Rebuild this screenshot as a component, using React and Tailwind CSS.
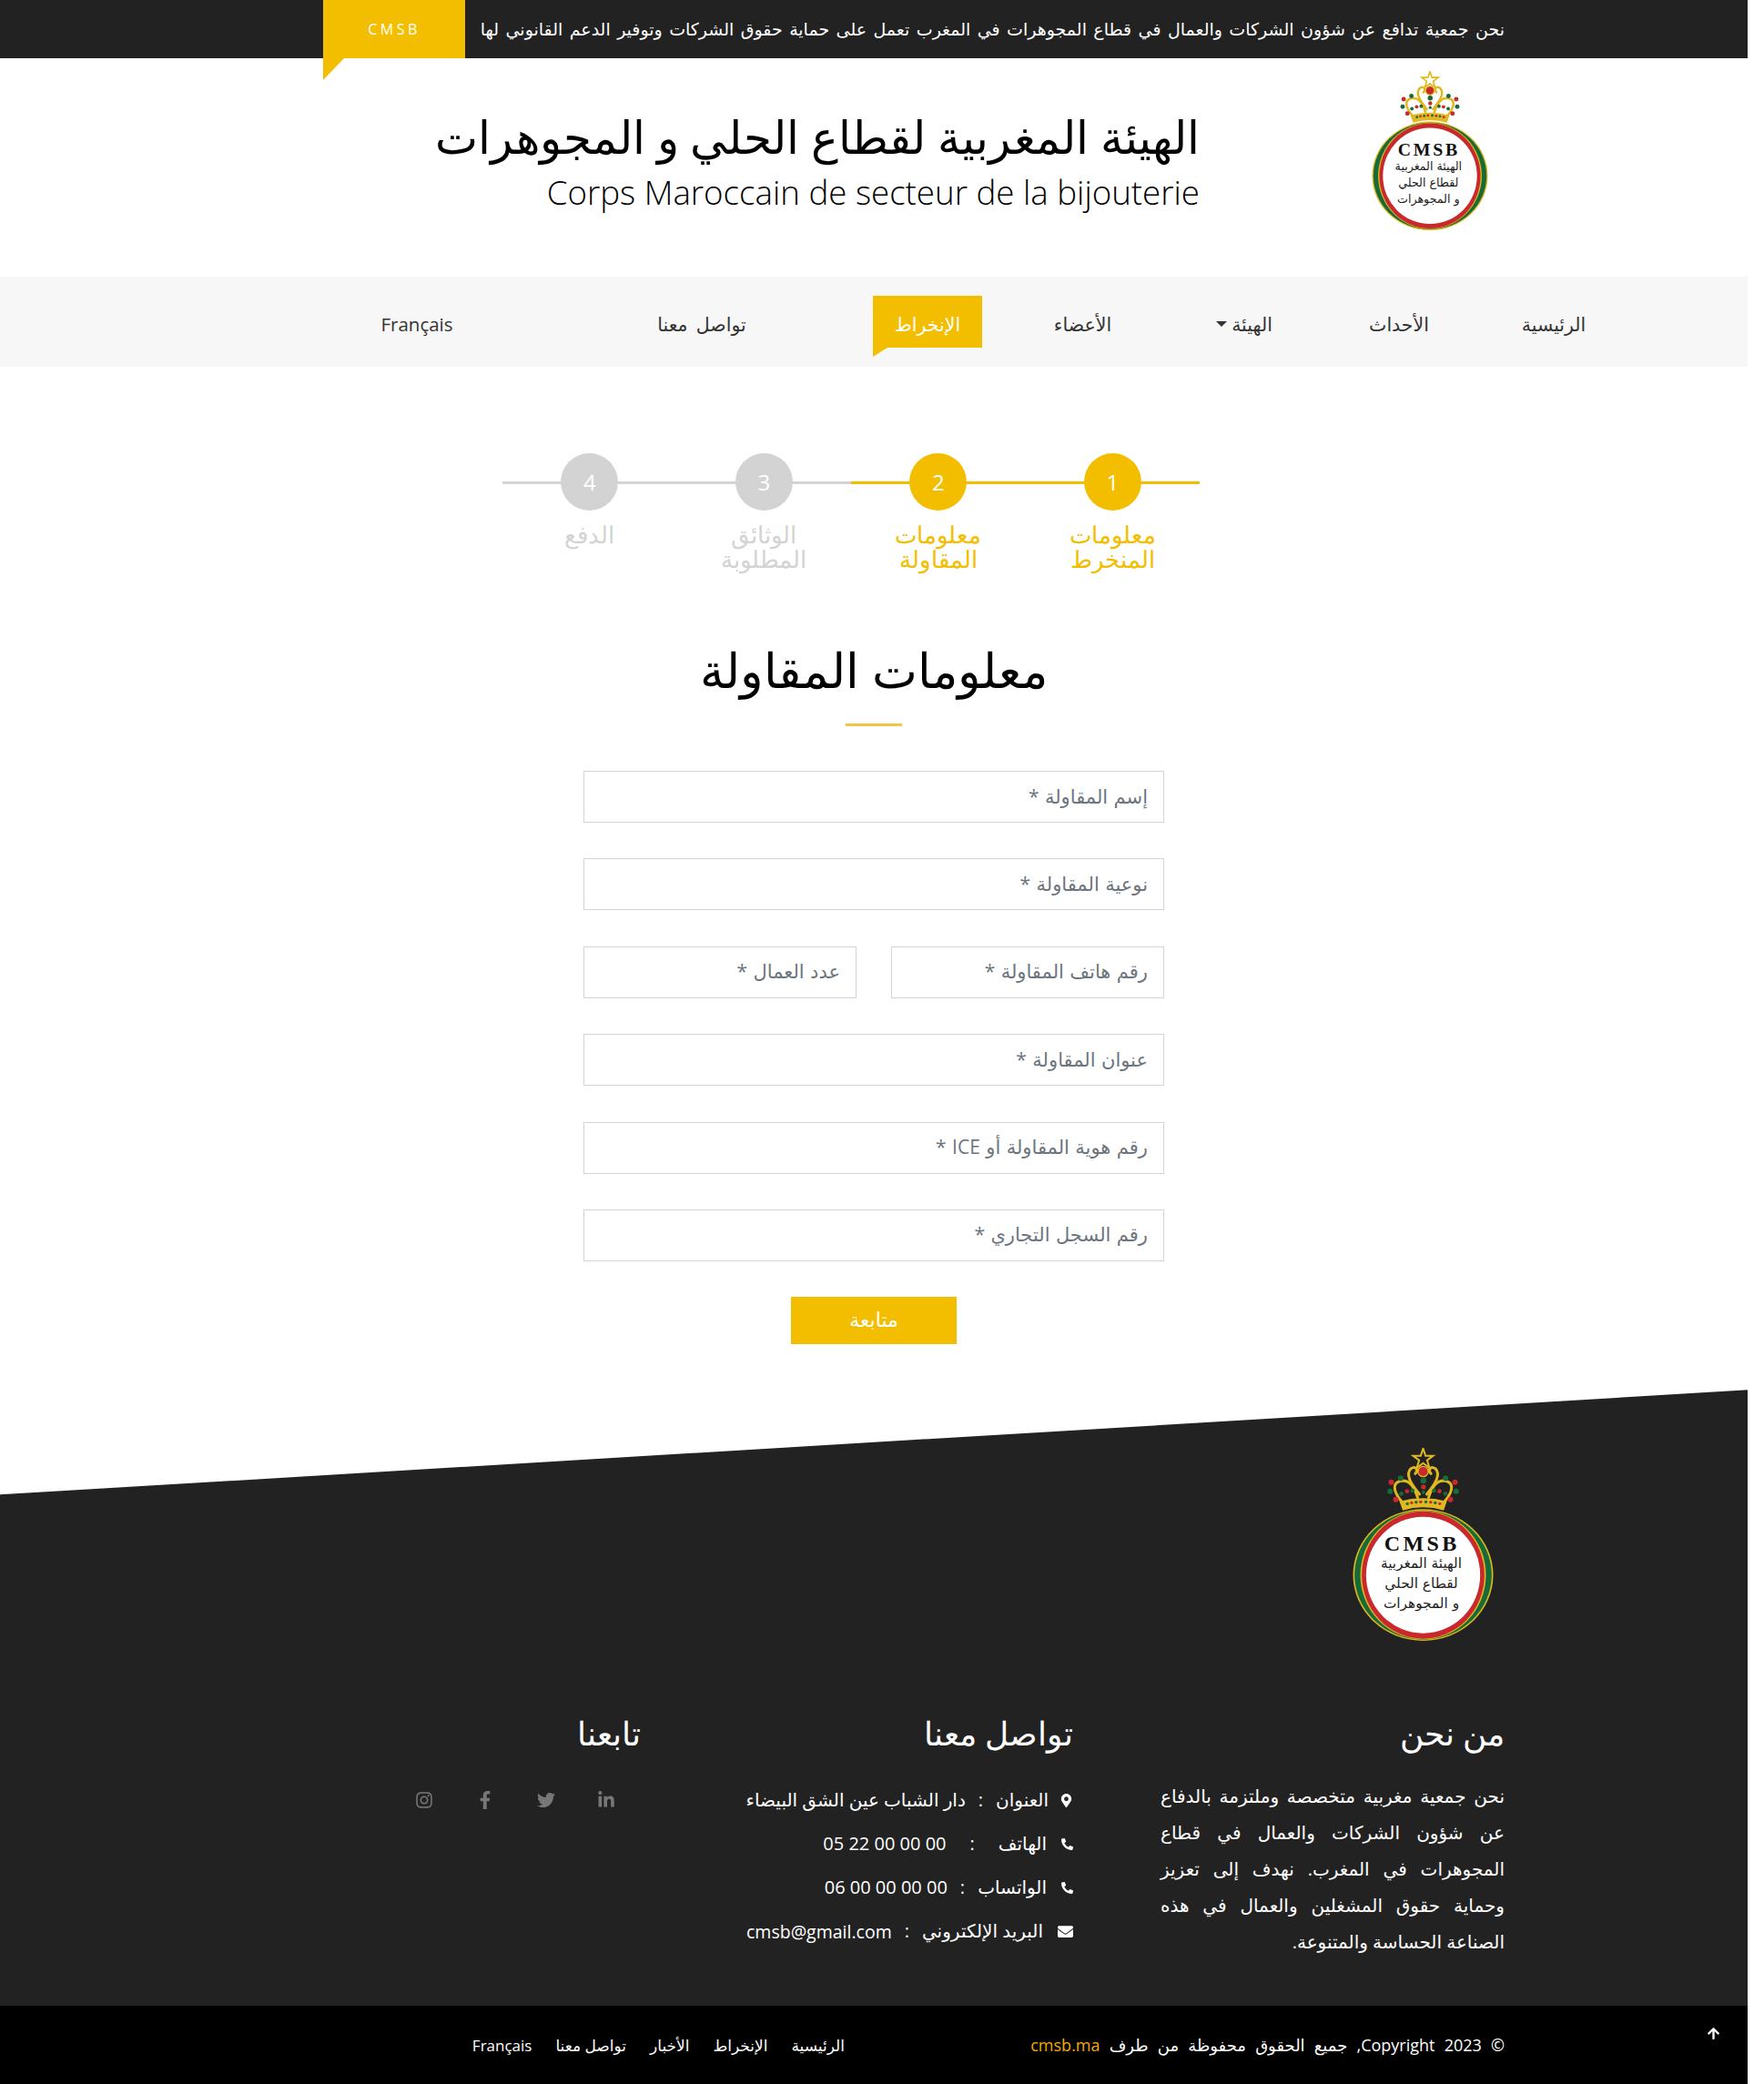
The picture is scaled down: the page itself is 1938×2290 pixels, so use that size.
import {
  FaArrowUp,
  FaEnvelope,
  FaFacebookF,
  FaInstagram,
  FaLinkedinIn,
  FaMapMarkerAlt,
  FaPhoneAlt,
  FaTwitter,
} from "react-icons/fa";

const navItems = [
  { label: "الرئيسية", width: "w-[170px]" },
  { label: "الأحداث", width: "w-[170px]" },
  { label: "الهيئة", width: "w-[170px]", caret: true },
  { label: "الأعضاء", width: "w-[185px]" },
  { label: "الإنخراط", width: "w-[120px] mr-[18px]", active: true },
  { label: "تواصل معنا", width: "w-[376px]" },
  { label: "Français", width: "w-[250px]" },
];

const steps = [
  { n: 1, label: "معلومات المنخرط", on: true },
  { n: 2, label: "معلومات المقاولة", on: true },
  { n: 3, label: "الوثائق المطلوبة" },
  { n: 4, label: "الدفع" },
];

const Logo = ({ className }) => {
  const dots = [
    [205, 175, "#c9282d", 9], [220, 232, "#c9282d", 9], [415, 175, "#c9282d", 9], [400, 232, "#c9282d", 9],
    [236, 162, "#176b38", 9], [201, 205, "#176b38", 9], [384, 162, "#176b38", 9], [419, 205, "#176b38", 9],
    [311, 170, "#176b38", 10], [311, 191, "#c9282d", 8], [311, 208, "#176b38", 6],
    [257, 205, "#c9282d", 7], [238, 213, "#176b38", 7], [275, 203, "#176b38", 7],
    [364, 205, "#c9282d", 7], [383, 213, "#176b38", 7], [346, 203, "#176b38", 7],
    [258, 246, "#176b38", 5], [272, 243, "#c9282d", 5], [287, 241, "#176b38", 5], [302, 240, "#c9282d", 5],
    [319, 240, "#176b38", 5], [335, 241, "#c9282d", 5], [350, 243, "#176b38", 5], [365, 246, "#c9282d", 5],
  ];
  return (
    <svg viewBox="78 62 464 636" className={className}>
      <path d="M310 64 L318 88 L343 88 L323 103 L331 128 L310 112 L289 128 L297 103 L277 88 L302 88 Z" fill="none" stroke="#e0b81f" strokeWidth="6" />
      <circle cx="310" cy="140" r="17" fill="#c9282d" stroke="#e0b81f" strokeWidth="4" />
      <g fill="none" stroke="#e0b81f" strokeWidth="9" strokeLinecap="round">
        <path d="M240 240 C210 205 205 172 245 170 C272 172 284 200 292 226" />
        <path d="M380 240 C410 205 415 172 375 170 C348 172 336 200 328 226" />
        <path d="M298 215 C270 180 250 150 270 130 C285 120 297 135 284 147" />
        <path d="M322 215 C350 180 370 150 350 130 C335 120 323 135 336 147" />
      </g>
      <path d="M243 268 Q310 248 378 268 L388 238 Q310 218 232 238 Z" fill="#e0b81f" />
      {dots.map(([cx, cy, fill, r]) => (
        <circle key={`${cx}-${cy}`} cx={cx} cy={cy} r={r} fill={fill} />
      ))}
      <ellipse cx="310" cy="481" rx="231" ry="217" fill="#e0b81f" />
      <ellipse cx="310" cy="481" rx="226" ry="213" fill="#176b38" />
      <ellipse cx="310" cy="481" rx="207" ry="212" fill="#e0b81f" />
      <ellipse cx="310" cy="481" rx="202" ry="210" fill="#c9282d" />
      <ellipse cx="310" cy="481" rx="188" ry="192" fill="#ffffff" />
      <text x="306" y="400" textAnchor="middle" fontFamily="Liberation Serif" fontWeight="700" fontSize="72" letterSpacing="10" fill="#111">CMSB</text>
      <g fontFamily="DejaVu Sans" fontSize="46" fill="#222" textAnchor="middle" direction="rtl">
        <text x="304" y="458">الهيئة المغربية</text>
        <text x="304" y="525">لقطاع الحلي</text>
        <text x="304" y="590">و المجوهرات</text>
      </g>
    </svg>
  );
};

const Field = ({ placeholder, className = "w-full" }) => (
  <input
    placeholder={placeholder}
    className={`${className} h-[57px] border border-[#d4d4d4] bg-white px-[17px] pb-[2px] text-right text-[21px] text-[#333] [word-spacing:1px] placeholder:text-[#6c757d]`}
  />
);

const Heading = ({ children }) => (
  <h3 className="h-12 text-[36px] leading-[44px] font-light text-white">{children}</h3>
);

const App = () => {
  return (
    <div dir="rtl" className="w-[1920px] bg-white font-['Open_Sans','DejaVu_Sans',sans-serif] text-[#222]">
      {/* top strip */}
      <div className="flex h-16 items-center bg-[#222222] pr-[267px] text-white">
        <p className="w-[1124px] overflow-hidden text-[19px] whitespace-nowrap [word-spacing:2.5px]">
          نحن جمعية تدافع عن شؤون الشركات والعمال في قطاع المجوهرات في المغرب تعمل على حماية حقوق الشركات وتوفير الدعم القانوني لها
        </p>
        <div className="relative mr-[18px] flex h-16 w-[156px] items-center justify-center bg-[#f4be00] text-[16px] tracking-[3.5px]">
          CMSB
          <span className="absolute top-full left-0 border-t-[24px] border-r-[23px] border-t-[#f4be00] border-r-transparent" />
        </div>
      </div>

      {/* brand */}
      <header className="flex h-[240px] pr-[285px]">
        <Logo className="mt-[14px] h-[175px] w-[128px]" />
        <div className="mt-[58px] mr-[189px]">
          <h1 className="text-[49.5px] leading-[56px] font-light text-black">الهيئة المغربية لقطاع الحلي و المجوهرات</h1>
          <p dir="ltr" className="text-right text-[36.7px] leading-[66px] font-light text-black">
            Corps Maroccain de secteur de la bijouterie
          </p>
        </div>
      </header>

      {/* nav */}
      <nav className="flex h-[99px] items-start bg-[#f7f7f7] pt-[21px] pr-[128px] text-[20.5px] text-[#333] [word-spacing:4px]">
        {navItems.map((item) => (
          <a
            key={item.label}
            className={`${item.width} relative flex h-[57px] items-center justify-center pt-[5px] ${item.active ? "bg-[#f4be00] text-white" : ""}`}
          >
            {item.label}
            {item.caret && (
              <span className="mr-[5px] border-x-[6px] border-t-[6px] border-x-transparent border-t-[#333]" />
            )}
            {item.active && (
              <span className="absolute top-full left-0 border-t-[10px] border-r-[16px] border-t-[#f4be00] border-r-transparent" />
            )}
          </a>
        ))}
      </nav>

      {/* steps */}
      <div className="pt-[95px]">
        <div className="mr-[602px] flex h-[150px] w-[766px]">
          {steps.map((s) => (
            <div key={s.n} className={`relative w-1/4 text-center ${s.on ? "text-[#f4be00]" : "text-[#d3d3d3]"}`}>
              <span className={`absolute top-[31px] left-0 h-[3px] w-full ${s.on ? "bg-[#f4be00]" : "bg-[#d3d3d3]"}`} />
              <div className={`relative mx-auto flex h-[63px] w-[63px] items-center justify-center rounded-full text-[24px] text-white ${s.on ? "bg-[#f4be00]" : "bg-[#d3d3d3]"}`}>
                {s.n}
              </div>
              <p className="mx-auto mt-[13px] w-[120px] text-[26px] leading-[27px] font-light">{s.label}</p>
            </div>
          ))}
        </div>
      </div>

      {/* form */}
      <section className="pt-[52px]">
        <h2 className="h-20 text-center text-[53px] leading-[72px] font-light text-black">معلومات المقاولة</h2>
        <div className="mx-auto mt-[15px] h-[3px] w-[62px] bg-[#f5c542]" />
        <form className="mx-auto mt-[49px] flex w-[638px] flex-col gap-[39.4px]">
          <Field placeholder="إسم المقاولة *" />
          <Field placeholder="نوعية المقاولة *" />
          <div className="flex justify-between">
            <Field placeholder="رقم هاتف المقاولة *" className="w-[300px]" />
            <Field placeholder="عدد العمال *" className="w-[300px]" />
          </div>
          <Field placeholder="عنوان المقاولة *" />
          <Field placeholder="رقم هوية المقاولة أو ICE *" />
          <Field placeholder="رقم السجل التجاري *" />
          <button type="button" className="mx-auto h-[52px] w-[182px] bg-[#f4be00] pb-1 text-[22px] text-white">
            متابعة
          </button>
        </form>
      </section>

      {/* footer */}
      <footer className="mt-[50px] h-[677px] bg-[#222222] [clip-path:polygon(0_115px,100%_0,100%_100%,0_100%)]">
        <div className="pt-16 pr-[279px]">
          <Logo className="h-[212px] w-[155px]" />
        </div>
        <div className="mt-[80px] flex pr-[267px] text-white">
          <div className="w-[474px]">
            <Heading>من نحن</Heading>
            <p className="mt-[23px] w-[378px] text-justify text-[20px] leading-[40px]">
              نحن جمعية مغربية متخصصة وملتزمة بالدفاع عن شؤون الشركات والعمال في قطاع المجوهرات في المغرب. نهدف إلى تعزيز وحماية حقوق المشغلين والعمال في هذه الصناعة الحساسة والمتنوعة.
            </p>
          </div>
          <div className="w-[475px]">
            <Heading>تواصل معنا</Heading>
            <ul className="mt-[23px] text-[20px]">
              <li className="flex h-12 items-center gap-[14px]">
                <FaMapMarkerAlt className="-ml-[2px] text-[15px]" />
                <span>العنوان</span><span>:</span><span>دار الشباب عين الشق البيضاء</span>
              </li>
              <li className="flex h-12 items-center gap-[14px]">
                <FaPhoneAlt className="ml-[2px] text-[13px]" />
                <span>الهاتف</span><span className="mx-3">:</span><span dir="ltr">05 22 00 00 00</span>
              </li>
              <li className="flex h-12 items-center gap-[14px]">
                <FaPhoneAlt className="ml-[2px] text-[13px]" />
                <span>الواتساب</span><span>:</span><span dir="ltr">06 00 00 00 00</span>
              </li>
              <li className="flex h-12 items-center gap-[14px]">
                <FaEnvelope className="ml-[2px] text-[17px]" />
                <span>البريد الإلكتروني</span><span>:</span><span dir="ltr" className="text-[19.5px]">cmsb@gmail.com</span>
              </li>
            </ul>
          </div>
          <div>
            <Heading>تابعنا</Heading>
            <div className="mt-[23px] mr-[5px] flex text-[20px] text-[#777777]">
              <a className="flex h-12 w-[66px] items-center justify-center"><FaLinkedinIn /></a>
              <a className="flex h-12 w-[67px] items-center justify-center"><FaTwitter /></a>
              <a className="flex h-12 w-[67px] items-center justify-center"><FaFacebookF /></a>
              <a className="flex h-12 w-[66px] items-center justify-center"><FaInstagram /></a>
            </div>
          </div>
        </div>
      </footer>

      {/* bottom bar */}
      <div className="relative flex h-[86px] items-center bg-black pr-[267px] text-[17px] text-white">
        <p className="w-[522px] text-[18px] whitespace-nowrap [word-spacing:5.5px]">
          © Copyright 2023, جميع الحقوق محفوظة من طرف <span className="text-[#f4a900]">cmsb.ma</span>
        </p>
        <div className="mr-[203px] flex gap-[26px]">
          <a>الرئيسية</a>
          <a>الإنخراط</a>
          <a>الأخبار</a>
          <a>تواصل معنا</a>
          <a>Français</a>
        </div>
        <FaArrowUp className="absolute top-[23px] left-[1875px] text-[15px]" />
      </div>
    </div>
  );
};

export default App;
